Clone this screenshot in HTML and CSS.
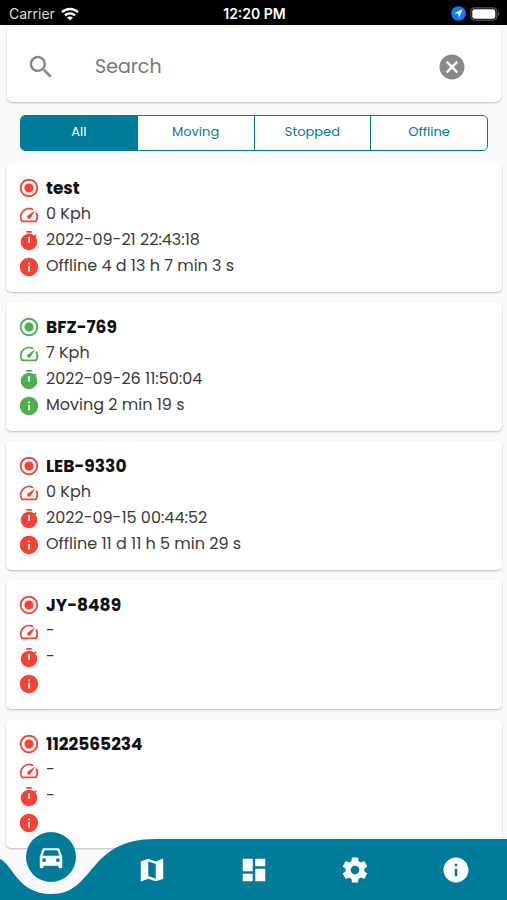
FILE: index.html
```html
<!DOCTYPE html>
<html lang="en">
<head>
<meta charset="utf-8">
<meta name="viewport" content="width=device-width, initial-scale=1">
<title>Vehicles</title>
<link rel="stylesheet" href="styles.css">
</head>
<body>
<svg class="sprite" aria-hidden="true">
  <symbol id="radio" viewBox="0 0 24 24"><path d="M12 7c-2.76 0-5 2.24-5 5s2.24 5 5 5 5-2.24 5-5-2.24-5-5-5zm0-5C6.48 2 2 6.48 2 12s4.480 10 10 10 10-4.480 10-10S17.520 2 12 2zm0 18c-4.420 0-8-3.580-8-8s3.580-8 8-8 8 3.580 8 8-3.580 8-8 8z"/></symbol>
  <symbol id="speed" viewBox="0 0 24 24"><path d="M20.380 8.570l-1.230 1.850a8 8 0 0 1-.22 7.580H5.070A8 8 0 0 1 15.580 6.850l1.850-1.230A10 10 0 0 0 3.350 19a2 2 0 0 0 1.720 1h13.850a2 2 0 0 0 1.740-1 10 10 0 0 0-.27-10.440zM10.590 15.410a2 2 0 0 0 2.830 0l5.660-8.490-8.490 5.660a2 2 0 0 0 0 2.830z"/></symbol>
  <symbol id="timer" viewBox="0 0 24 24"><path d="M15 1H9v2h6V1zm4.030 6.390 1.420-1.420c-.43-.51-.9-.99-1.410-1.410l-1.420 1.420C16.070 4.740 14.120 4 12 4c-4.970 0-9 4.030-9 9s4.020 9 9 9 9-4.030 9-9c0-2.120-.74-4.070-1.970-5.610zM13 14h-2V8h2v6z"/></symbol>
  <symbol id="info" viewBox="0 0 24 24"><path d="M12 2C6.480 2 2 6.480 2 12s4.480 10 10 10 10-4.480 10-10S17.520 2 12 2zm1 15h-2v-6h2v6zm0-8h-2V7h2v2z"/></symbol>
</svg>

<header class="status">
  <span class="carrier">Carrier
    <svg width="18" height="14" viewBox="0 0 18 14" fill="none" stroke="#fff" stroke-width="2.400"><path class="arcs" d="M1 5.200C5.500.9 12.500.9 17 5.200M4 8.400c2.900-2.600 7.100-2.600 10 0"/><path stroke="none" d="M9 13.500 6.100 10.600c1.700-1.500 4.100-1.500 5.800 0z"/></svg>
  </span>
  <span class="clock">12:20 PM</span>
  <span class="indicators">
    <svg width="15" height="15" viewBox="0 0 15 15"><circle cx="7.500" cy="7.500" r="7.300" fill="#0a7cff"/><path fill="#fff" d="M11.700 3.300 3.200 7.200l4 .6.6 4z"/></svg>
    <svg width="30" height="14" viewBox="0 0 30 14"><rect x=".8" y=".8" width="26" height="12.400" rx="3.600" fill="none" stroke="#555" stroke-width="1.200"/><rect x="2.300" y="2.300" width="23" height="9.400" rx="2.200" fill="#fff"/><path d="M28.200 4.800c1.400.6 1.400 3.800 0 4.400z" fill="#666"/></svg>
  </span>
</header>

<main>
  <form class="search">
    <label for="q" aria-label="Search"><svg width="30" height="30" viewBox="0 0 24 24"><path d="M15.500 14h-.79l-.28-.27C15.410 12.590 16 11.110 16 9.500 16 5.910 13.090 3 9.500 3S3 5.910 3 9.500 5.910 16 9.500 16c1.610 0 3.090-.59 4.230-1.570l.27.28v.79l5 4.990L20.490 19l-4.990-5zm-6 0C7.010 14 5 11.990 5 9.500S7.010 5 9.500 5 14 7.010 14 9.500 11.990 14 9.500 14z"/></svg></label>
    <input id="q" type="text" placeholder="Search">
    <button type="reset" aria-label="Clear"><svg width="30" height="30" viewBox="0 0 24 24"><path d="M12 2C6.470 2 2 6.470 2 12s4.470 10 10 10 10-4.470 10-10S17.530 2 12 2zm5 13.590L15.590 17 12 13.410 8.410 17 7 15.590 10.590 12 7 8.410 8.410 7 12 10.590 15.590 7 17 8.410 13.410 12 17 15.590z"/></svg></button>
  </form>

  <div class="filters">
    <button type="button" class="active" aria-pressed="true">All</button>
    <button type="button">Moving</button>
    <button type="button">Stopped</button>
    <button type="button">Offline</button>
  </div>

  <ul class="vehicles">
    <li class="card">
      <h2><svg><use href="#radio"/></svg>test</h2>
      <p><svg><use href="#speed"/></svg>0 Kph</p>
      <p><svg><use href="#timer"/></svg>2022-09-21 22:43:18</p>
      <p><svg><use href="#info"/></svg>Offline 4 d 13 h 7 min 3 s</p>
    </li>
    <li class="card moving">
      <h2><svg><use href="#radio"/></svg>BFZ-769</h2>
      <p><svg><use href="#speed"/></svg>7 Kph</p>
      <p><svg><use href="#timer"/></svg>2022-09-26 11:50:04</p>
      <p><svg><use href="#info"/></svg>Moving 2 min 19 s</p>
    </li>
    <li class="card">
      <h2><svg><use href="#radio"/></svg>LEB-9330</h2>
      <p><svg><use href="#speed"/></svg>0 Kph</p>
      <p><svg><use href="#timer"/></svg>2022-09-15 00:44:52</p>
      <p><svg><use href="#info"/></svg>Offline 11 d 11 h 5 min 29 s</p>
    </li>
    <li class="card">
      <h2><svg><use href="#radio"/></svg>JY-8489</h2>
      <p><svg><use href="#speed"/></svg>-</p>
      <p><svg><use href="#timer"/></svg>-</p>
      <p><svg><use href="#info"/></svg></p>
    </li>
    <li class="card">
      <h2><svg><use href="#radio"/></svg>1122565234</h2>
      <p><svg><use href="#speed"/></svg>-</p>
      <p><svg><use href="#timer"/></svg>-</p>
      <p><svg><use href="#info"/></svg></p>
    </li>
  </ul>
</main>

<nav class="tabs">
  <div class="wave"><svg width="156" height="61" viewBox="0 0 156 61"><path d="M0 20C14 27 18 55 51 55 96 55 86 0 156 0V61H0z"/></svg><span></span></div>
  <a href="#vehicles" class="current" aria-label="Vehicles"><b><svg viewBox="0 0 24 24"><path d="M18.920 6.010C18.720 5.420 18.160 5 17.500 5h-11c-.66 0-1.210.42-1.420 1.010L3 12v8c0 .55.45 1 1 1h1c.55 0 1-.45 1-1v-1h12v1c0 .55.45 1 1 1h1c.55 0 1-.45 1-1v-8l-2.080-5.990zM6.850 6.500h10.290l1.580 4.500H5.280l1.570-4.500zM6.500 16c-.83 0-1.500-.67-1.500-1.500S5.670 13 6.500 13s1.500.67 1.500 1.500S7.330 16 6.500 16zm11 0c-.83 0-1.500-.67-1.500-1.500s.67-1.500 1.500-1.500 1.500.67 1.500 1.500-.67 1.500-1.500 1.500z"/></svg></b></a>
  <a href="#map" aria-label="Map"><svg viewBox="0 0 24 24"><path d="M20.500 3l-.16.03L15 5.100 9 3 3.360 4.900c-.21.07-.36.25-.36.48V20.500c0 .28.22.5.5.5l.16-.03L9 18.900l6 2.100 5.640-1.900c.21-.07.36-.25.36-.48V3.500c0-.28-.22-.5-.5-.5zM15 19l-6-2.110V5l6 2.110V19z"/></svg></a>
  <a href="#dashboard" aria-label="Dashboard"><svg viewBox="0 0 24 24"><path d="M3 13h8V3H3v10zm0 8h8v-6H3v6zm10 0h8V11h-8v10zm0-18v6h8V3h-8z"/></svg></a>
  <a href="#settings" aria-label="Settings"><svg viewBox="0 0 24 24"><path d="M19.430 12.980c.04-.32.07-.64.07-.98s-.03-.66-.07-.98l2.110-1.650c.19-.15.24-.42.12-.64l-2-3.460c-.12-.22-.39-.3-.61-.22l-2.490 1c-.52-.4-1.080-.73-1.690-.98l-.38-2.650C14.460 2.180 14.250 2 14 2h-4c-.25 0-.46.18-.49.42l-.38 2.650c-.61.25-1.170.59-1.690.98l-2.490-1c-.23-.09-.49 0-.61.22l-2 3.460c-.13.22-.07.49.12.64l2.110 1.650c-.04.32-.07.65-.07.98s.03.66.07.98l-2.110 1.650c-.19.15-.24.42-.12.64l2 3.460c.12.22.39.3.61.22l2.490-1c.52.4 1.080.73 1.690.98l.38 2.650c.03.24.24.42.49.42h4c.25 0 .46-.18.49-.42l.38-2.650c.61-.25 1.170-.59 1.690-.98l2.490 1c.23.09.49 0 .61-.22l2-3.460c.12-.22.07-.49-.12-.64l-2.110-1.650zM12 15.500c-1.930 0-3.500-1.570-3.500-3.500s1.570-3.500 3.500-3.500 3.500 1.570 3.500 3.500-1.570 3.500-3.500 3.500z"/></svg></a>
  <a href="#about" aria-label="About"><svg><use href="#info"/></svg></a>
</nav>
</body>
</html>
```
FILE: styles.css
```css
* {
  box-sizing: border-box;
}

:root {
  --teal: #007c9a;
  --red: #f44336;
  --green: #4caf50;
}

body {
  margin: 0;
  height: 100vh;
  display: flex;
  flex-direction: column;
  overflow: hidden;
  background: #fafafa;
  color: #3a3a3a;
  font-family: Poppins, Inter, sans-serif;
  font-size: 16px;
}

svg {
  display: block;
  fill: currentColor;
}

.sprite {
  position: absolute;
  width: 0;
  height: 0;
}

.status {
  display: grid;
  grid-template-columns: 1fr auto 1fr;
  align-items: center;
  flex: none;
  height: 25px;
  padding: 2px 7px 0 9px;
  background: #000;
  color: #fff;
  font: 14px Inter, sans-serif;
}

.carrier,
.indicators {
  display: flex;
  align-items: center;
  gap: 6px;
}

.carrier {
  color: #ddd;
}

.carrier svg {
  color: #fff;
}

.arcs {
  fill: none;
}

.indicators {
  justify-content: flex-end;
  gap: 4px;
}

.clock {
  font-weight: 600;
}

main {
  flex: 1;
  min-height: 0;
  overflow: hidden;
}

.search,
.card {
  background: #fff;
  border-radius: 5px;
  box-shadow: 0 1px 2px rgba(0, 0, 0, 0.25);
}

.search {
  display: flex;
  align-items: center;
  height: 75px;
  margin: 2px 6px 13px 7px;
  padding: 4px 34px 0 19px;
  color: #888;
}

.search input {
  flex: 1;
  min-width: 0;
  margin-left: 39px;
  padding: 0;
  border: 0;
  outline: 0;
  background: none;
  color: #333;
  font: inherit;
  font-size: 19px;
}

.search input::placeholder {
  color: #777;
  opacity: 1;
}

button {
  padding: 0;
  border: 0;
  background: none;
  color: inherit;
  font: inherit;
}

.filters {
  display: flex;
  height: 36px;
  margin: 0 19px 12px 20px;
  border: 1px solid var(--teal);
  border-radius: 5px;
  overflow: hidden;
  background: #fff;
}

.filters button {
  flex: 1;
  padding-bottom: 2px;
  color: var(--teal);
  font-size: 13px;
}

.filters button + button {
  border-left: 1px solid var(--teal);
}

.filters .active {
  background: var(--teal);
  color: #fff;
}

.vehicles {
  display: flex;
  flex-direction: column;
  gap: 10px;
  margin: 0;
  padding: 0 5px 0 6px;
  list-style: none;
}

.card {
  flex: none;
  padding: 12px 12px 13px;
}

.card h2,
.card p {
  display: flex;
  align-items: flex-start;
  gap: 6px;
  height: 26px;
  margin: 0;
  font-size: 16px;
  font-weight: 400;
  line-height: 26px;
}

.card h2 {
  align-items: center;
  color: #111;
  font-size: 17px;
  font-weight: 700;
}

.card svg {
  flex: none;
  width: 22px;
  height: 22px;
  color: var(--red);
}

.card p svg {
  margin-top: 3px;
}

.card.moving svg {
  color: var(--green);
}

.tabs {
  position: fixed;
  inset: auto 0 0;
  display: flex;
  height: 61px;
}

/* Bar background: the curved dip under the current tab, then a flat run. */
.wave {
  position: absolute;
  inset: 0;
  display: flex;
  color: var(--teal);
}

.wave span {
  flex: 1;
  background: var(--teal);
}

.tabs a {
  position: relative;
  flex: 1;
  display: flex;
  align-items: center;
  justify-content: center;
  color: #fff;
}

.tabs a svg {
  width: 30px;
  height: 30px;
}

.tabs .current {
  align-items: flex-start;
}

.current b {
  display: grid;
  place-items: center;
  width: 50px;
  height: 50px;
  margin-top: -7px;
  border-radius: 50%;
  background: var(--teal);
}
```
